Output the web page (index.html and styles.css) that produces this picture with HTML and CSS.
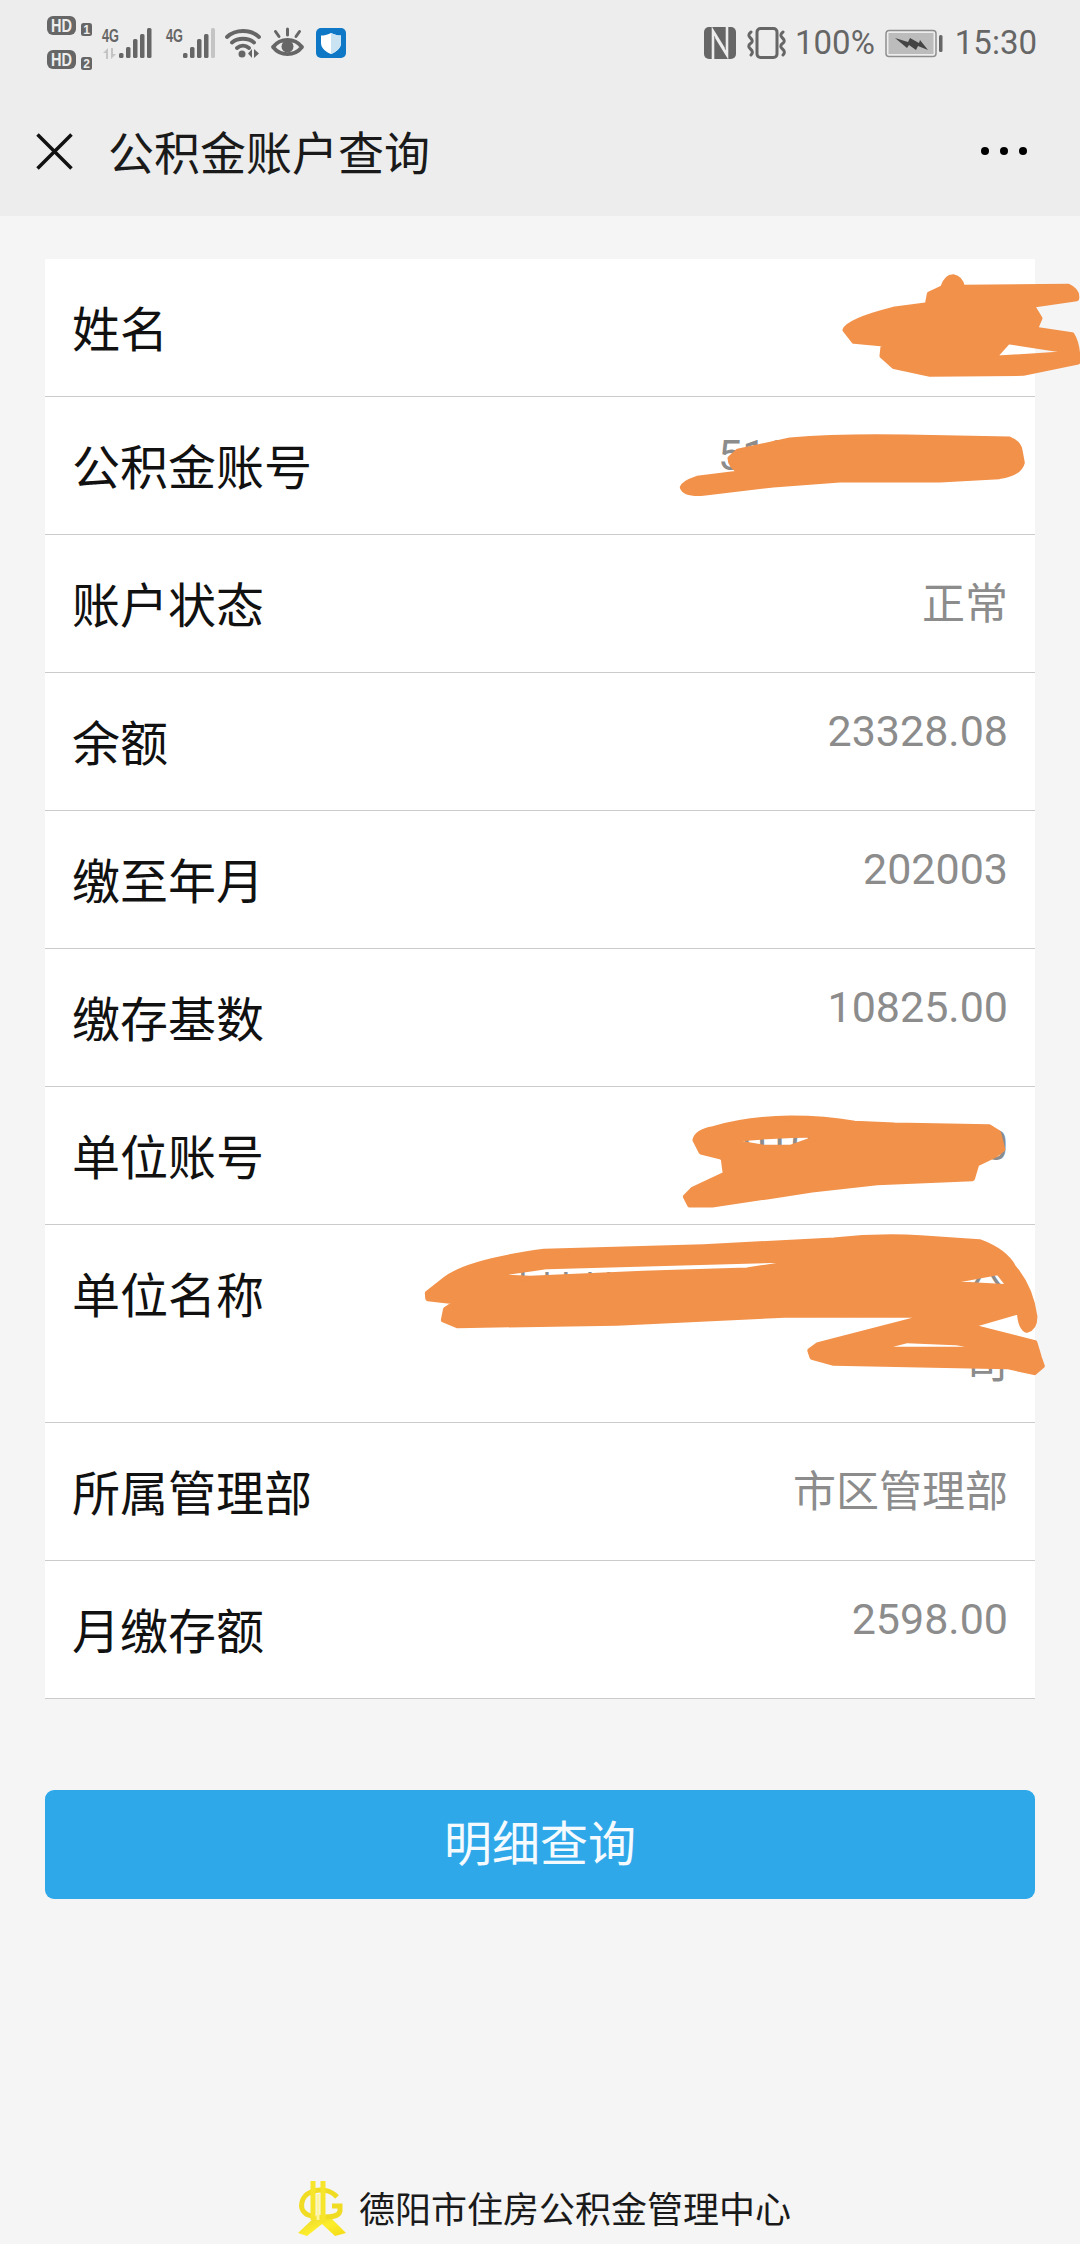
FILE: index.html
```html
<!DOCTYPE html>
<html lang="zh">
<head>
<meta charset="utf-8">
<title>公积金账户查询</title>
<link rel="stylesheet" href="styles.css">
</head>
<body>
<div class="page">
  <header class="top">
    <div class="status">
      <svg class="i-hd" viewBox="0 0 45 54">
        <rect width="29" height="19" rx="6" class="dk"/><text x="14.500" y="15.500" textLength="21" lengthAdjust="spacingAndGlyphs" class="t-hd">HD</text>
        <rect x="34" y="7" width="11" height="13" rx="2.500" class="dk"/><text x="39.500" y="18" class="t-sim">1</text>
        <rect y="34" width="29" height="19" rx="6" class="dk"/><text x="14.500" y="49.500" textLength="21" lengthAdjust="spacingAndGlyphs" class="t-hd">HD</text>
        <rect x="34" y="41" width="11" height="13" rx="2.500" class="dk"/><text x="39.500" y="52" class="t-sim">2</text>
      </svg>
      <svg class="i-sig" viewBox="0 0 52 30">
        <text x="0" y="14" textLength="17" lengthAdjust="spacingAndGlyphs" class="t-4g">4G</text>
        <path d="M6 20v11H4v-6H1zM9 20h2v6h3l-5 5z" class="lt"/>
        <rect x="17" y="25" width="4.500" height="5" rx="1.500" class="dk"/><rect x="24" y="19" width="4.500" height="11" rx="1.500" class="dk"/><rect x="31" y="11" width="4.500" height="19" rx="1.500" class="dk"/><rect x="38" y="6" width="4.500" height="24" rx="1.500" class="dk"/><rect x="45" y="0" width="4.500" height="30" rx="1.500" class="dk"/>
      </svg>
      <svg class="i-sig2" viewBox="0 0 49 30">
        <text x="0" y="14" textLength="17" lengthAdjust="spacingAndGlyphs" class="t-4g">4G</text>
        <rect x="17" y="25" width="4.500" height="5" rx="1.500" class="dk"/><rect x="24" y="19" width="4.500" height="11" rx="1.500" class="dk"/><rect x="31" y="11" width="4.500" height="19" rx="1.500" class="dk"/><rect x="38" y="6" width="4.500" height="24" rx="1.500" class="dk"/><rect x="45" y="0" width="4" height="30" rx="1.500" class="lt"/>
      </svg>
      <svg class="i-wifi" viewBox="0 0 36 30">
        <path d="M2 9C10.500 1 25.500 1 34 9M7 14.500C13 9.500 23 9.500 29 14.500M12 20C15.500 17 20.500 17 24 20" class="ln4"/>
        <circle cx="17" cy="26" r="3.500" class="dk"/>
        <path d="M27 21v9l-4-4.500zM29 21v9l5-4.500z" class="dk"/>
      </svg>
      <svg class="i-eye" viewBox="0 0 33 30">
        <path d="M2 19C9.500 9.500 23.500 9.500 31 19C23.500 28.500 9.500 28.500 2 19Z" class="ln4"/>
        <circle cx="16.500" cy="18.500" r="6" class="dk"/>
        <path d="M16.500 1v6M4.500 3.500l3.500 5M28.500 3.500l-3.500 5" class="ln3"/>
      </svg>
      <svg class="i-shield" viewBox="0 0 30 30">
        <rect width="30" height="30" rx="5" fill="#0f78c6"/>
        <path d="M15 5C19 7 22 7.500 25 7.500V15C25 20.500 20 24 15 26C10 24 5 20.500 5 15V7.500C8 7.500 11 7 15 5Z" fill="#fff"/>
        <path d="M15 5C19 7 22 7.500 25 7.500V15C25 20.500 20 24 15 26Z" fill="#c9e3f2"/>
      </svg>
      <div class="status-right">
        <svg class="i-nfc" viewBox="0 0 32 32">
          <rect width="32" height="32" rx="5" class="dk"/>
          <path d="M9 33V4L20 22M23 -1V28L12 10" class="nfc-ln"/>
        </svg>
        <svg class="i-vib" viewBox="0 0 42 32">
          <rect x="11" y="1.500" width="20" height="29" rx="3.500" class="ln3"/>
          <path d="M5 5Q1 8 4.500 11Q8 14 4.500 16.500Q1 19 4.500 22Q8 25 5 28M37 5Q33 8 36.500 11Q40 14 36.500 16.500Q33 19 36.500 22Q40 25 37 28" class="ln3"/>
        </svg>
        <span class="st-txt pct">100%</span>
        <svg class="i-bat" viewBox="0 0 58 27">
          <rect x="1" y="0.500" width="50" height="26" rx="3" fill="none" stroke="#8e8e8e" stroke-width="1.500"/>
          <rect x="3.500" y="3" width="45" height="21" fill="#bcbcbc"/>
          <rect x="54" y="5" width="3.500" height="17" rx="1.500" fill="#666"/>
          <path d="M10 8L23 12L25 8L34 13L35 10L43 20L33 16L31 20L24 15L22 18Z" fill="#444"/>
        </svg>
        <span class="st-txt time">15:30</span>
      </div>
    </div>
    <nav class="nav">
      <svg class="i-x" viewBox="0 0 37 37"><path d="M1.500 1.500L35.500 35.500M35.500 1.500L1.500 35.500" class="x-ln"/></svg>
      <h1 class="title">公积金账户查询</h1>
      <svg class="i-dots" viewBox="0 0 46 8"><circle cx="4" cy="4" r="4"/><circle cx="23" cy="4" r="4"/><circle cx="42" cy="4" r="4"/></svg>
    </nav>
  </header>

  <main class="main">
    <section class="card">
      <div class="row"><span class="label">姓名</span><span class="value">某某</span></div>
      <div class="row"><span class="label">公积金账号</span><span class="value num">510000000000</span></div>
      <div class="row"><span class="label">账户状态</span><span class="value">正常</span></div>
      <div class="row"><span class="label">余额</span><span class="value num">23328.08</span></div>
      <div class="row"><span class="label">缴至年月</span><span class="value num">202003</span></div>
      <div class="row"><span class="label">缴存基数</span><span class="value num">10825.00</span></div>
      <div class="row"><span class="label">单位账号</span><span class="value num">201000000000</span></div>
      <div class="row row-tall"><span class="label">单位名称</span><span class="value">某某某某某某某某某某有限公司</span></div>
      <div class="row"><span class="label">所属管理部</span><span class="value">市区管理部</span></div>
      <div class="row"><span class="label">月缴存额</span><span class="value num">2598.00</span></div>
    </section>
    <button class="btn" type="button">明细查询</button>
  </main>

  <footer class="foot">
    <svg class="logo" viewBox="0 0 51 56">
      <defs><linearGradient id="gold" x1="0" y1="0" x2="1" y2="1" gradientUnits="objectBoundingBox"><stop offset="0" stop-color="#e6d02e"/><stop offset=".55" stop-color="#fdee2c"/><stop offset="1" stop-color="#f2da14"/></linearGradient></defs>
      <path d="M21 35L2 53L11 56L26 44L39 56L50 53L32 35Z" fill="url(#gold)"/>
      <path d="M41 17C35 10 24 8 15 12C5 16 3 28 9 33C12 36 16 36 19 36M27 37C34 37 43 37 44 31V26H36" fill="none" stroke="#f1dc24" stroke-width="5"/>
      <path d="M17 1V40M27 1V42" fill="none" stroke="#f6e52a" stroke-width="5"/>
      <path d="M22 14V40" fill="none" stroke="#fff59a" stroke-width="3"/>
    </svg>
    <span class="foot-txt">德阳市住房公积金管理中心</span>
  </footer>

  <svg class="scribbles" viewBox="0 0 1080 2244" aria-hidden="true">
    <g transform="translate(640 250) scale(.3333)">
      <path fill-rule="evenodd" d="M615 240Q625 212 760 178L862 164L868 132L908 113Q918 80 940 80Q962 84 968 112L1285 109Q1314 122 1310 146L1176 166L1200 205L1186 238L1296 254Q1314 282 1314 336L1150 370L870 373L762 350L726 318L730 282L642 274ZM1060 325L1105 275L1265 300L1265 312ZM865 322L1000 322L1000 326L880 326Z"/>
      <path d="M270 625L293 604L450 570Q600 557 800 561L1108 567Q1135 578 1140 600L1147 638Q1140 670 1078 680L900 690L600 690L400 705L190 730Q135 734 127 712Q130 699 172 685L304 668Q270 650 270 625Z"/>
    </g>
    <g transform="translate(400 1090) scale(.4337 .3333)">
      <path fill-rule="evenodd" d="M680 150Q685 124 722 116Q800 86 900 84Q980 84 1048 100L1140 105L1358 110L1380 128L1390 178L1372 196L1330 222L1320 266L1100 278L950 300L850 320L720 345L668 345L658 320L675 298L750 252L745 203L694 186ZM750 152Q850 135 980 135L900 172L840 172ZM765 293L820 268L850 272Z"/>
      <path fill-rule="evenodd" d="M63 610L104 568Q155 515 332 484L700 470L1000 450Q1100 436 1200 443L1336 455Q1396 484 1415 532Q1455 592 1464 680Q1464 714 1445 721Q1430 714 1428 665L1312 708L1464 758L1474 802L1481 828L1463 848L1400 830L1200 825L1000 820L950 802L945 782L964 764L1225 676L900 675L500 700L132 707L100 690L105 658L130 636L64 626ZM190 558L340 530L900 510L1040 490L1180 490L950 510L800 540L560 550L300 565ZM1255 578L1380 548L1405 590L1330 585ZM1090 778L1170 752L1280 758L1370 778Z"/>
    </g>
  </svg>
</div>
</body>
</html>
```

FILE: styles.css
```css
* { box-sizing: border-box; margin: 0; padding: 0; }
html, body { width: 1080px; height: 2244px; overflow: hidden; }
body { background: #f5f5f5; font-family: Roboto, "Noto Sans CJK SC", sans-serif; color: #111; }
.page { position: relative; width: 1080px; height: 2244px; display: flex; flex-direction: column; }

.top { background: #ededed; height: 216px; flex: none; }
.status { height: 86px; padding: 0 43px 0 47px; display: flex; align-items: center; gap: 10px; }
.status-right { margin-left: auto; display: flex; align-items: center; gap: 10px; }
.status svg { display: block; flex: none; overflow: visible; }
.dk { fill: #666; }
.lt { fill: #c4c4c4; }
.ln3 { fill: none; stroke: #666; stroke-width: 3; stroke-linecap: round; stroke-linejoin: round; }
.ln4 { fill: none; stroke: #666; stroke-width: 3.800; stroke-linecap: round; stroke-linejoin: round; }
.nfc-ln { fill: none; stroke: #ededed; stroke-width: 2.600; stroke-linejoin: miter; }
.t-hd { font: 700 18px "Liberation Sans", sans-serif; fill: #ededed; text-anchor: middle; }
.t-sim { font: 700 12px "Liberation Sans", sans-serif; fill: #ededed; text-anchor: middle; }
.t-4g { font: 700 19px "Liberation Sans", sans-serif; fill: #666; }
.i-hd { width: 45px; height: 54px; }
.i-sig { width: 52px; height: 30px; margin-right: 2px; }
.i-sig2 { width: 49px; height: 30px; }
.i-wifi { width: 36px; height: 30px; }
.i-eye { width: 33px; height: 30px; margin-right: 2px; }
.i-shield { width: 30px; height: 30px; }
.i-nfc { width: 32px; height: 32px; overflow: hidden !important; }
.i-vib { width: 42px; height: 32px; margin-right: -3px; }
.i-bat { width: 58px; height: 27px; margin-right: 2px; }
.st-txt { font-size: 33px; line-height: 36px; color: #666; }

.nav { height: 130px; padding: 0 53px 0 36px; display: flex; align-items: center; }
.i-x { width: 37px; height: 37px; flex: none; margin-right: 35px; }
.x-ln { fill: none; stroke: #111; stroke-width: 3.500; }
.title { font: 400 46px/60px "Noto Sans CJK SC", sans-serif; color: #1a1a1a; padding-bottom: 3px; }
.i-dots { width: 46px; height: 8px; margin-left: auto; fill: #000; }

.main { padding: 43px 45px 0; }
.card { background: #fff; }
.row { display: flex; justify-content: space-between; align-items: flex-start; min-height: 138px; padding: 35px 27px 33px; border-bottom: 1px solid #cbcbcb; }
.row-tall { padding-bottom: 24px; }
.label { font-size: 48px; line-height: 69px; color: #111; flex: none; margin-top: -2px; font-family: "Noto Sans CJK SC", sans-serif; }
.value { font-size: 43px; line-height: 69px; color: #8c8c8c; text-align: right; max-width: 560px; font-family: Roboto, "Noto Sans CJK SC", sans-serif; }
.num { margin-top: -11px; }

.btn { display: block; width: 100%; height: 109px; margin-top: 91px; padding-bottom: 9px; border: 0; border-radius: 9px; background: #2fa8ea; color: #f4fafe; font: 400 48px/100px "Noto Sans CJK SC", sans-serif; }

.foot { margin-top: auto; padding: 0 0 6px 296px; height: 66px; display: flex; align-items: center; gap: 12px; }
.logo { width: 51px; height: 56px; flex: none; }
.foot-txt { font: 400 36px/50px "Noto Sans CJK SC", sans-serif; color: #1a1a1a; white-space: nowrap; margin-bottom: 3px; }

.scribbles { position: absolute; left: 0; top: 0; width: 1080px; height: 2244px; fill: #f2914a; stroke: #f2914a; stroke-width: 5; stroke-linejoin: round; pointer-events: none; }
.scribbles path { vector-effect: non-scaling-stroke; }
```
